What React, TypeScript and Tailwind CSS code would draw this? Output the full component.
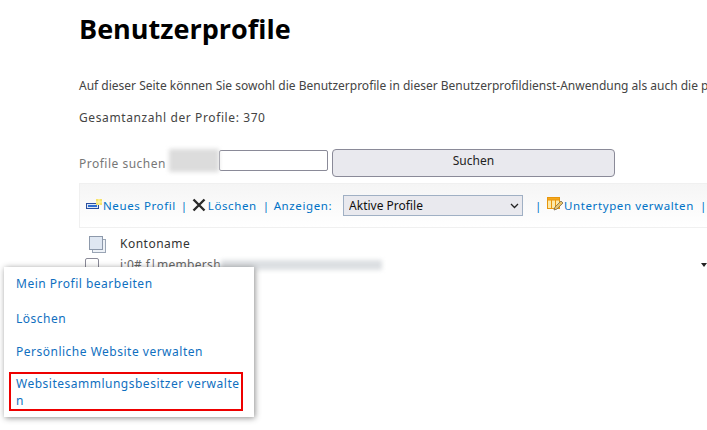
const TEXT_FONT = "font-['Noto_Sans',sans-serif]";

function NewProfileIcon() {
  return (
    <svg width="16" height="13" viewBox="0 0 16 13" className="shrink-0">
      <rect x="0.5" y="4.5" width="12" height="5" fill="#dfe9f7" stroke="#2b4f9e" />
      <rect x="2" y="6" width="9" height="2" fill="#2f6fd0" />
      <rect x="10" y="0" width="6" height="6" fill="#f7e36a" />
      <path d="M13 0v6M10 3h6" stroke="#fff6b8" strokeWidth="1" />
    </svg>
  );
}

function DeleteIcon() {
  return (
    <svg width="14" height="14" viewBox="0 0 14 14" className="shrink-0 -translate-y-[1px]">
      <path d="M1.5 1.5l11 11M12.5 1.5l-11 11" stroke="#2a2a2a" strokeWidth="2.4" />
    </svg>
  );
}

function SubtypeIcon() {
  return (
    <svg width="17" height="15" viewBox="0 0 17 15" className="shrink-0 -translate-y-[1px]">
      <rect x="0.5" y="0.5" width="12" height="11" fill="#fde9a8" stroke="#e8960c" />
      <rect x="0.5" y="0.5" width="12" height="2.5" fill="#f5a81c" stroke="#e8960c" />
      <path d="M4.5 3v8M8.5 3v8" stroke="#e8960c" />
      <path d="M7 13l1-3 6-6 2 2-6 6z" fill="#e9c46a" stroke="#7a6a4a" strokeWidth="0.8" />
    </svg>
  );
}

function Sep() {
  return <span className="text-[#0072c6]">|</span>;
}

export default function App() {
  return (
    <div className={`relative h-[430px] w-[707px] overflow-hidden bg-white ${TEXT_FONT}`}>
      <div className="w-[900px] pl-[79px] pt-[10px]">
        <h1 className="font-['Open_Sans',sans-serif] text-[27px] font-bold leading-[38px] text-black">
          Benutzerprofile
        </h1>

        <p className="mt-[30px] whitespace-nowrap text-[12px] leading-[16px] text-[#444444]">
          Auf dieser Seite können Sie sowohl die Benutzerprofile in dieser Benutzerprofildienst-Anwendung als auch die persönlichen Websites verwalten.
        </p>
        <p className="mt-[16px] text-[12px] leading-[16px] tracking-[0.6px] text-[#444444]">
          Gesamtanzahl der Profile: 370
        </p>

        <div className="mt-[23px] flex h-[28px] items-start">
          <span className="mt-[7px] text-[12px] leading-[16px] tracking-[0.5px] text-[#777777]">Profile suchen</span>
          <div className="ml-[3px] h-[23px] w-[50px] bg-[#dcdcdc] blur-[2px]" />
          <input className="mt-[1px] h-[21px] w-[109px] rounded-[2px] border border-[#8a8a98] bg-white" readOnly />
          <button className="ml-[4px] h-[28px] w-[283px] rounded-[4px] border border-[#8a8a98] bg-[#e9e9ee] pb-[4px] text-[12px] text-[#222222]">
            Suchen
          </button>
        </div>

        <div className="mt-[6px] flex h-[45px] w-[640px] items-center border border-[#f0f0f0] bg-gradient-to-b from-[#f5f5f5] to-white pl-[6px] text-[11.5px] tracking-[0.6px] text-[#0072c6]">
          <NewProfileIcon />
          <span className="ml-[1px]">Neues Profil</span>
          <span className="ml-[5px] mr-[4px]"><Sep /></span>
          <DeleteIcon />
          <span className="ml-[2px]">Löschen</span>
          <span className="ml-[6px] mr-[4px]"><Sep /></span>
          <span>Anzeigen:</span>
          <div className="relative ml-[11px] h-[21px] w-[180px]">
            <select className="h-[21px] w-[180px] appearance-none border border-[#a0b0c4] bg-[#e9e9ee] pl-[5px] text-[12px] tracking-normal text-[#111111]">
              <option>Aktive Profile</option>
            </select>
            <svg width="9" height="6" viewBox="0 0 9 6" className="absolute right-[4px] top-[8px]">
              <path d="M1 1l3.5 3.5L8 1" fill="none" stroke="#222222" strokeWidth="1.3" />
            </svg>
          </div>
          <span className="ml-[12px] mr-[5px]"><Sep /></span>
          <SubtypeIcon />
          <span>Untertypen verwalten</span>
          <span className="ml-[6px]"><Sep /></span>
        </div>

        <div className="mt-[3px] flex h-[26px] items-center pl-[10px]">
          <svg width="17" height="17" viewBox="0 0 17 17" className="shrink-0">
            <rect x="3.5" y="3.5" width="13" height="13" fill="#eef2f7" stroke="#9aa5b5" />
            <rect x="0.5" y="0.5" width="13" height="13" fill="#dfe7f2" stroke="#8d99ab" />
          </svg>
          <span className="ml-[14px] text-[12px] tracking-[0.5px] text-[#333333]">Kontoname</span>
        </div>

        <div className="-mt-[1px] flex h-[18px] w-[628px] items-center pl-[6px]">
          <div className="size-[14px] shrink-0 rounded-[2px] border border-[#8a8a98] bg-white" />
          <span className="ml-[21px] text-[12px] tracking-[0.3px] text-[#666666]">i:0#.f|membersh</span>
          <div className="h-[10px] w-[161px] bg-[#dcdfe2] blur-[2px]" />
          <svg width="6" height="4" viewBox="0 0 6 4" className="ml-auto shrink-0">
            <path d="M0 0h6L3 4z" fill="#222222" />
          </svg>
        </div>
      </div>

      <div className="absolute left-[4px] top-[267px] h-[150px] w-[250px] bg-white pt-[1px] text-[12px] tracking-[0.5px] text-[#0f6fc0] shadow-[1px_1px_6px_rgba(0,0,0,0.45)]">
        <div className="h-[34px] pl-[12px] pt-[8px] leading-[16px]">Mein Profil bearbeiten</div>
        <div className="h-[33px] pl-[12px] pt-[9px] leading-[16px]">Löschen</div>
        <div className="h-[33px] pl-[12px] pt-[9px] leading-[16px]">Persönliche Website verwalten</div>
        <div className="ml-[5px] mt-[4px] h-[39px] w-[234px] break-all border-2 border-[#ee0000] pl-[5px] pt-[1px] leading-[17px]">
          Websitesammlungsbesitzer verwalten
        </div>
      </div>
    </div>
  );
}
